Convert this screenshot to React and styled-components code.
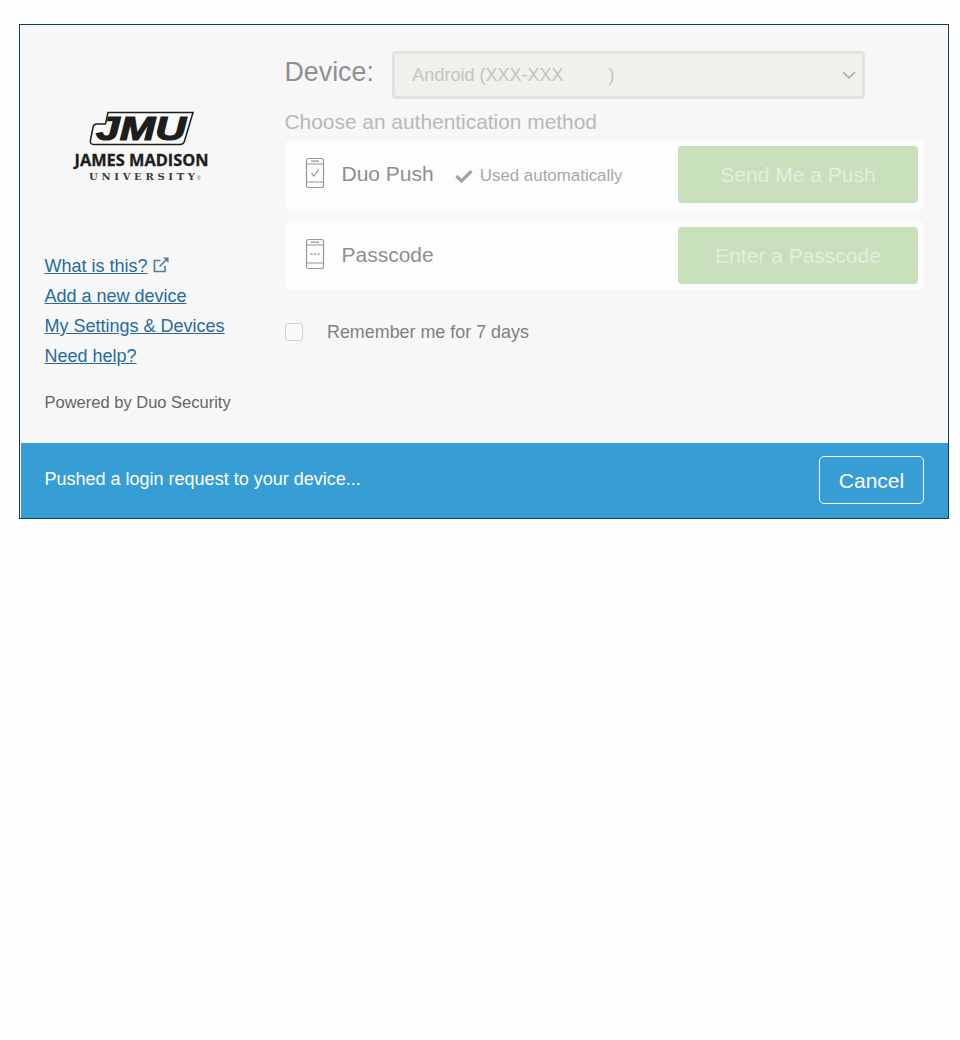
import React from "react";
import styled, { createGlobalStyle } from "styled-components";

const GlobalStyle = createGlobalStyle`
  html, body {
    margin: 0;
    padding: 0;
    background: #fefefe;
    font-family: "Liberation Sans", Arial, sans-serif;
  }
`;

const PhoneIcon = ({ children }) => (
  <MethodIcon width="20" height="32" viewBox="0 0 20 32" fill="none" stroke="#989898" strokeWidth="1.200">
    <rect x="1.500" y="1.500" width="17" height="29" rx="2" />
    <path d="M1.500 7h17M1.500 25h17M6 4.200h8" />
    {children}
  </MethodIcon>
);

const JmuLogo = () => (
  <svg width="136" height="72" viewBox="0 0 136 72">
    <path
      d="M35 1.500H120L111.500 30Q110.500 33.500 107 33.500H21Q16.500 33.500 17.500 29L20 16.500Q20.500 13 24 13H32.500Z"
      fill="#fbfbfb"
      stroke="#1d1d1b"
      strokeWidth="1.500"
    />
    <text
      x="23"
      y="29"
      fontFamily="Liberation Sans, sans-serif"
      fontSize="33"
      fontWeight="700"
      fontStyle="italic"
      fill="#1d1d1b"
      stroke="#1d1d1b"
      strokeWidth="1.200"
      textLength="90"
      lengthAdjust="spacingAndGlyphs"
    >
      JMU
    </text>
    <text
      x="1.500"
      y="55"
      fontFamily="Open Sans, sans-serif"
      fontSize="15.500"
      fontWeight="700"
      fill="#1d1d1b"
      stroke="#1d1d1b"
      strokeWidth="0.300"
      textLength="134"
      lengthAdjust="spacingAndGlyphs"
    >
      JAMES MADISON
    </text>
    <text
      x="16"
      y="68.500"
      fontFamily="DejaVu Serif, serif"
      fontSize="10"
      fontWeight="700"
      fill="#3a3a3a"
      textLength="106"
      lengthAdjust="spacing"
    >
      UNIVERSITY
    </text>
    <text x="124" y="68.500" fontFamily="Liberation Sans, sans-serif" fontSize="5" fill="#555">®</text>
  </svg>
);

const App = () => (
  <Page>
    <GlobalStyle />
    <Frame>
      <Body>
        <Sidebar>
          <LogoWrap>
            <JmuLogo />
          </LogoWrap>
          <LinkList>
            <li>
              <SideLink href="#">What is this?</SideLink>
              <ExternalIcon width="16" height="16" viewBox="0 0 16 16" fill="none" stroke="#557da0" strokeWidth="1.700">
                <path d="M7.500 3.500H1.500V14.500H12V9" />
                <path d="M6.500 9.500L13 3" />
                <path d="M10 0.500H15.500V6Z" fill="#557da0" stroke="none" />
              </ExternalIcon>
            </li>
            <li><SideLink href="#">Add a new device</SideLink></li>
            <li><SideLink href="#">My Settings &amp; Devices</SideLink></li>
            <li><SideLink href="#">Need help?</SideLink></li>
          </LinkList>
          <Powered>Powered by Duo Security</Powered>
        </Sidebar>
        <Main>
          <DeviceRow>
            <DeviceLabel>Device:</DeviceLabel>
            <DeviceSelect>
              <span>Android (XXX-XXX&nbsp;&nbsp;&nbsp;&nbsp;&nbsp;&nbsp;&nbsp;&nbsp;&nbsp;)</span>
              <svg width="14" height="8" viewBox="0 0 14 8" fill="none" stroke="#b4b4b4" strokeWidth="1.800">
                <path d="M1 1l6 6 6-6" />
              </svg>
            </DeviceSelect>
          </DeviceRow>
          <MethodHeading>Choose an authentication method</MethodHeading>
          <MethodList>
            <MethodRow>
              <PhoneIcon>
                <path d="M6.500 16l2.500 3 4.500-6.500" />
              </PhoneIcon>
              <MethodName>Duo Push</MethodName>
              <AutoNote>
                <svg width="18" height="14" viewBox="0 0 18 14" fill="none" stroke="#a3a3a3" strokeWidth="3.200">
                  <path d="M1.500 7l5 5L16.500 2" />
                </svg>
                Used automatically
              </AutoNote>
              <ActionButton>Send Me a Push</ActionButton>
            </MethodRow>
            <MethodRow>
              <PhoneIcon>
                <path d="M5.500 16h2M9 16h2M12.500 16h2" strokeWidth="1.600" />
              </PhoneIcon>
              <MethodName>Passcode</MethodName>
              <ActionButton>Enter a Passcode</ActionButton>
            </MethodRow>
          </MethodList>
          <RememberRow>
            <FakeCheckbox />
            Remember me for 7 days
          </RememberRow>
        </Main>
      </Body>
      <StatusBar>
        <StatusText>Pushed a login request to your device...</StatusText>
        <CancelButton>Cancel</CancelButton>
      </StatusBar>
    </Frame>
  </Page>
);

const Page = styled.div`
  min-height: 1040px;
  box-sizing: border-box;
  padding: 24px 11px 0 19px;
`;

const Frame = styled.div`
  width: 930px;
  height: 495px;
  box-sizing: border-box;
  border: 1px solid #0f3d56;
  background: #f7f7f7;
  display: flex;
  flex-direction: column;
`;

const Body = styled.div`
  flex: 1;
  display: flex;
`;

const Sidebar = styled.div`
  width: 265px;
  box-sizing: border-box;
  padding-left: 24.500px;
`;

const LogoWrap = styled.div`
  padding: 86px 0 0 28.500px;
  height: 226px;
  box-sizing: border-box;
  line-height: 0;
`;

const LinkList = styled.ul`
  list-style: none;
  margin: 0;
  padding: 0;
  font-size: 18px;
  line-height: 30px;
`;

const SideLink = styled.a`
  color: #256b9d;
  text-decoration: underline;
`;

const ExternalIcon = styled.svg`
  margin-left: 5px;
  vertical-align: -1px;
`;

const Powered = styled.div`
  margin-top: 21px;
  font-size: 16.500px;
  line-height: 20px;
  color: #666;
`;

const Main = styled.div`
  flex: 1;
  padding: 26px 24px 0 0;
`;

const DeviceRow = styled.div`
  display: flex;
  align-items: center;
  gap: 18px;
`;

const DeviceLabel = styled.div`
  margin-top: -5px;
  margin-left: -0.500px;
  font-size: 26.800px;
  color: #8f8f8f;
`;

const DeviceSelect = styled.div`
  width: 473px;
  height: 48px;
  box-sizing: border-box;
  border: 3px solid #e2e2e0;
  border-radius: 4px;
  background: #f0f0ec;
  display: flex;
  align-items: center;
  justify-content: space-between;
  padding: 0 6px 0 17.500px;
  font-size: 18px;
  color: #c4c4c4;
`;

const MethodHeading = styled.div`
  margin-top: 11px;
  margin-left: -0.500px;
  font-size: 20.900px;
  line-height: 24px;
  color: #b8b8b8;
`;

const MethodList = styled.div`
  margin-top: 6px;
  display: flex;
  flex-direction: column;
  gap: 12px;
`;

const MethodRow = styled.div`
  height: 69px;
  box-sizing: border-box;
  background: #fdfdfd;
  border-radius: 5px;
  padding: 0 6px 0 19.500px;
  display: flex;
  align-items: center;
`;

const MethodIcon = styled.svg`
  margin-top: -3px;
`;

const MethodName = styled.div`
  margin-left: 17px;
  margin-top: -2px;
  font-size: 21px;
  color: #8f8f8f;
`;

const AutoNote = styled.div`
  margin-left: 21px;
  margin-top: 2px;
  display: flex;
  align-items: center;
  gap: 7px;
  font-size: 16.900px;
  color: #a8a8a8;
`;

const ActionButton = styled.div`
  margin-left: auto;
  width: 240px;
  height: 57px;
  border-radius: 4px;
  background: #c8e0bc;
  color: #e4efdd;
  font-size: 21px;
  display: flex;
  align-items: center;
  justify-content: center;
`;

const RememberRow = styled.div`
  margin-top: 32px;
  display: flex;
  align-items: center;
  gap: 24px;
  font-size: 17.900px;
  line-height: 20px;
  color: #7f7f7f;
`;

const FakeCheckbox = styled.span`
  width: 18px;
  height: 18px;
  box-sizing: border-box;
  border: 1.500px solid #d4d4d4;
  border-radius: 3px;
  background: #f9f9f9;
`;

const StatusBar = styled.div`
  height: 75px;
  box-sizing: border-box;
  margin-left: 1px;
  background: #379ed5;
  display: flex;
  align-items: center;
  justify-content: space-between;
  padding: 0 24px 0 23.500px;
`;

const StatusText = styled.div`
  font-size: 18px;
  color: #fff;
  margin-top: -2px;
`;

const CancelButton = styled.div`
  width: 105px;
  height: 48px;
  margin-top: -2px;
  padding-top: 2px;
  box-sizing: border-box;
  border: 1px solid #fff;
  border-radius: 5px;
  color: #fff;
  font-size: 21px;
  display: flex;
  align-items: center;
  justify-content: center;
`;

export default App;
